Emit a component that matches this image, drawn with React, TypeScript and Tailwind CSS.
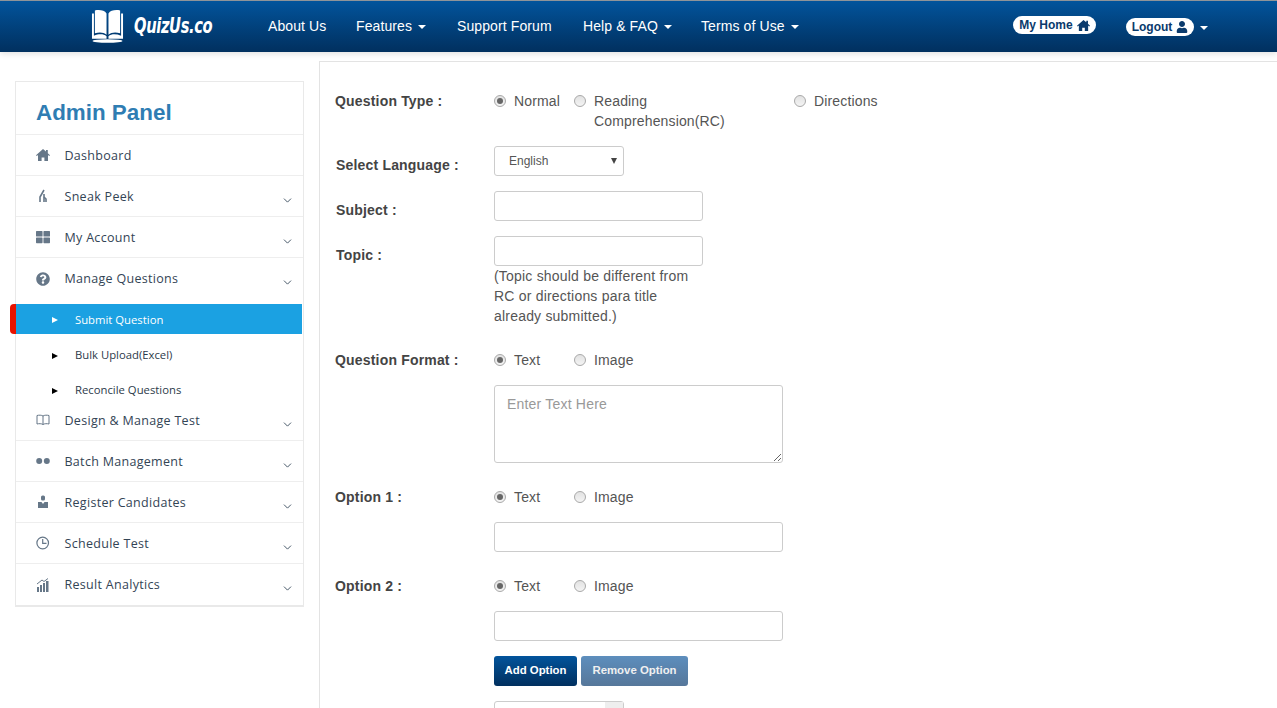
import { ChevronDown } from 'lucide-react';
import { FaUser, FaQuestionCircle, FaThLarge } from 'react-icons/fa';
import { ReactNode } from 'react';

function BookLogo() {
  return (
    <svg width="33" height="35" viewBox="0 0 34 35" className="shrink-0">
      <path d="M1 4 H3 V27 C8 25 13 25 16 27.5 V30 H1 Z" fill="#fff" />
      <path d="M33 4 H31 V27 C26 25 21 25 18 27.5 V30 H33 Z" fill="#fff" />
      <path d="M4 1 C9 0 14 1 16 4 V26 C13 23.5 9 23 4 24.5 Z" fill="#fff" />
      <path d="M30 1 C25 0 20 1 18 4 V26 C21 23.5 25 23 30 24.5 Z" fill="#fff" />
      <ellipse cx="17" cy="32.5" rx="15.5" ry="1.8" fill="#fff" />
    </svg>
  );
}

function HomeIcon({ size, color }: { size: number; color: string }) {
  return (
    <svg width={size} height={size} viewBox="0 0 14 14" fill={color} className="shrink-0">
      <path d="M7 1 L10 3.6 V2 H11.8 V5.2 L14 7.2 L13.2 8 L12 7 V13 H8.4 V9.4 H5.6 V13 H2 V7 L0.8 8 L0 7.2 Z" />
    </svg>
  );
}

function Caret() {
  return <span className="ml-[6px] inline-block border-x-4 border-t-4 border-x-transparent border-t-white align-middle" />;
}

function NavLink({ children, caret, className = '' }: { children: ReactNode; caret?: boolean; className?: string }) {
  return (
    <a className={`flex items-center text-[14px] tracking-[0.1px] whitespace-nowrap text-white ${className}`}>
      {children}
      {caret && <Caret />}
    </a>
  );
}

function Header() {
  return (
    <header className="flex h-[52px] items-center border-t border-[#8f9499] bg-gradient-to-b from-[#02549c] to-[#01305f] shadow-[0_2px_6px_rgba(0,0,0,0.12)]">
      <div className="ml-[91px] flex w-[177px] items-center gap-[10px]">
        <BookLogo />
        <span className="origin-left scale-x-[0.7] font-['DejaVu_Sans'] text-[21px] font-bold italic tracking-tight whitespace-nowrap text-white">
          QuizUs.co
        </span>
      </div>
      <nav className="flex items-center">
        <NavLink className="w-[88px]">About Us</NavLink>
        <NavLink caret className="w-[101px]">Features</NavLink>
        <NavLink className="w-[126px]">Support Forum</NavLink>
        <NavLink caret className="w-[118px]">Help &amp; FAQ</NavLink>
        <NavLink caret>Terms of Use</NavLink>
      </nav>
      <div className="ml-auto flex items-center">
        <span className="-mt-[3px] flex h-[18px] w-[83px] items-center justify-center gap-1 rounded-full bg-white text-[12px] font-bold text-[#0a3a6c]">
          My Home <HomeIcon size={13} color="#0a3a6c" />
        </span>
        <span className="mt-[1px] ml-[30px] flex h-[18px] w-[68px] items-center justify-center gap-1 rounded-full bg-white text-[12px] font-bold text-[#0a3a6c]">
          Logout <FaUser className="text-[12px]" />
        </span>
        <span className="mt-[1px] mr-[69px]">
          <Caret />
        </span>
      </div>
    </header>
  );
}

function PeekIcon() {
  return (
    <svg width="14" height="14" viewBox="0 0 14 14" fill="none" stroke="#667788" strokeWidth="1.6">
      <path d="M8 1 L4 8 V13 M8 5 V13" />
      <path d="M8 8 L10 10 V13" />
    </svg>
  );
}

function BookIcon() {
  return (
    <svg width="14" height="14" viewBox="0 0 14 14" fill="none" stroke="#667788" strokeWidth="1">
      <path d="M7 3 C5.5 2 3 2 1 2.5 V11 C3 10.5 5.5 10.5 7 11.5 C8.5 10.5 11 10.5 13 11 V2.5 C11 2 8.5 2 7 3 V11.5" />
    </svg>
  );
}

function DotsIcon() {
  return (
    <svg width="14" height="14" viewBox="0 0 14 14" fill="#667788">
      <circle cx="3.2" cy="7" r="3" />
      <circle cx="10.8" cy="7" r="3" />
    </svg>
  );
}

function PersonIcon() {
  return (
    <svg width="14" height="14" viewBox="0 0 14 14" fill="#667788">
      <rect x="5" y="0.5" width="4" height="5" rx="1.6" />
      <path d="M2 7 H5.5 L7 9 L8.5 7 H12 V13 H2 Z" />
    </svg>
  );
}

function ClockIcon() {
  return (
    <svg width="14" height="14" viewBox="0 0 14 14" fill="none" stroke="#667788" strokeWidth="1.2">
      <circle cx="6.7" cy="7" r="5.8" />
      <path d="M6.7 3 V7.4 H10.5" />
    </svg>
  );
}

function AnalyticsIcon() {
  return (
    <svg width="14" height="14" viewBox="0 0 14 14" fill="#667788">
      <rect x="1" y="9" width="2" height="5" />
      <rect x="4" y="7" width="2" height="7" />
      <rect x="7" y="5" width="2" height="9" />
      <rect x="10" y="3" width="2.5" height="11" />
      <path d="M1 6 L6 2 L8 3.5 L12 0.5" fill="none" stroke="#667788" strokeWidth="1" />
    </svg>
  );
}

const iconCls = 'text-[14px] text-[#667788]';

function MenuRow({ icon, label, chevron = true, border = true }: { icon: ReactNode; label: string; chevron?: boolean; border?: boolean }) {
  return (
    <div className={`flex h-[41px] items-center pl-[20px] ${border ? 'border-b border-[#eeeeee]' : ''}`}>
      <span className="flex w-[29px] shrink-0 items-center">{icon}</span>
      <span className="-ml-[0.5px] pt-[2px] text-[12.5px] tracking-[0.3px] text-[#334455]">{label}</span>
      {chevron && <ChevronDown size={13} strokeWidth={1.8} className="mt-[8px] mr-[9px] ml-auto text-[#445566]" />}
    </div>
  );
}

function SubRow({ label, active }: { label: string; active?: boolean }) {
  return (
    <div className={`relative flex items-center pt-[2px] pl-[36px] text-[11.3px] ${active ? 'h-[30px] bg-[#1ba1e2] text-white' : 'h-[35px] text-[#2c3a4a]'}`}>
      {active && <span className="absolute top-0 -left-[6px] h-[30px] w-[6px] rounded-l-[4px] bg-[#e81300]" />}
      <span className={`mr-[17px] h-0 w-0 border-y-[3.5px] border-l-[6px] border-y-transparent ${active ? 'border-l-white' : 'border-l-black'}`} />
      {label}
    </div>
  );
}

function Sidebar() {
  return (
    <aside className="mt-[29px] ml-[15px] w-[289px] shrink-0 self-start border border-b-2 border-[#e9e9e9] font-['Open_Sans']">
      <h2 className="flex h-[53px] items-center border-b border-[#eeeeee] pt-[10px] pl-[20px] font-['Liberation_Sans'] text-[22.4px] leading-none font-bold text-[#2f7db3]">
        Admin Panel
      </h2>
      <MenuRow icon={<HomeIcon size={14} color="#667788" />} label="Dashboard" chevron={false} />
      <MenuRow icon={<PeekIcon />} label="Sneak Peek" />
      <MenuRow icon={<FaThLarge className={iconCls} />} label="My Account" />
      <MenuRow icon={<FaQuestionCircle className={iconCls} />} label="Manage Questions" border={false} />
      <div className="mt-[5px] mr-[1px]">
        <SubRow label="Submit Question" active />
        <div className="mt-[3px]">
          <SubRow label="Bulk Upload(Excel)" />
          <SubRow label="Reconcile Questions" />
        </div>
      </div>
      <div className="-mt-[7px]">
        <MenuRow icon={<BookIcon />} label="Design & Manage Test" />
      </div>
      <MenuRow icon={<DotsIcon />} label="Batch Management" />
      <MenuRow icon={<PersonIcon />} label="Register Candidates" />
      <MenuRow icon={<ClockIcon />} label="Schedule Test" />
      <MenuRow icon={<AnalyticsIcon />} label="Result Analytics" border={false} />
    </aside>
  );
}

function Radio({ checked, label, className = '' }: { checked?: boolean; label: ReactNode; className?: string }) {
  return (
    <label className={`flex items-start text-[14px] leading-[20px] tracking-[0.15px] text-[#555555] ${className}`}>
      <span className="mt-[4px] mr-[8px] flex size-[12px] shrink-0 items-center justify-center rounded-full border border-[#a9a9a9] bg-gradient-to-b from-[#e2e2e2] to-[#f4f4f4]">
        {checked && <span className="size-[6px] rounded-full bg-[#666666]" />}
      </span>
      <span>{label}</span>
    </label>
  );
}

const labelCls = 'text-[14px] leading-[20px] font-bold tracking-[0.18px] text-[#444444]';

function Label({ children }: { children: ReactNode }) {
  return <span className={`w-[159px] shrink-0 ${labelCls}`}>{children}</span>;
}

function FieldLabel({ children }: { children: ReactNode }) {
  return <span className={`mt-[9px] ml-[1px] w-[158px] shrink-0 ${labelCls}`}>{children}</span>;
}

function TextInput({ wide }: { wide?: boolean }) {
  return <input className={`block h-[30px] rounded-[3px] border border-[#cccccc] bg-white ${wide ? 'w-[289px]' : 'w-[209px]'}`} />;
}

function FormatRow({ label }: { label: string }) {
  return (
    <div className="flex">
      <Label>{label}</Label>
      <Radio checked label="Text" className="w-[80px]" />
      <Radio label="Image" />
    </div>
  );
}

function Form() {
  return (
    <main className="mt-[9px] ml-[15px] min-w-0 flex-1 border-t border-l border-[#e3e3e3] pt-[29px] pl-[15px]">
      <div className="flex">
        <Label>Question Type :</Label>
        <Radio checked label="Normal" className="w-[80px]" />
        <Radio label={<>Reading<br />Comprehension(RC)</>} className="w-[220px]" />
        <Radio label="Directions" />
      </div>
      <div className="mt-[15px] flex">
        <FieldLabel>Select Language :</FieldLabel>
        <div className="flex h-[30px] w-[130px] items-center justify-between rounded-[3px] border border-[#cccccc] pr-[6px] pl-[14px] text-[12px] text-[#555555]">
          English
          <span className="border-x-[3.5px] border-t-[6px] border-x-transparent border-t-[#444444]" />
        </div>
      </div>
      <div className="mt-[15px] flex">
        <FieldLabel>Subject :</FieldLabel>
        <TextInput />
      </div>
      <div className="mt-[15px] flex">
        <FieldLabel>Topic :</FieldLabel>
        <div>
          <TextInput />
          <p className="w-[205px] text-[14px] leading-[20px] tracking-[0.2px] text-[#555555]">
            (Topic should be different from RC or directions para title already submitted.)
          </p>
        </div>
      </div>
      <div className="mt-[24px]">
        <FormatRow label="Question Format :" />
      </div>
      <div className="mt-[15px] ml-[159px]">
        <textarea
          placeholder="Enter Text Here"
          className="block h-[78px] w-[289px] rounded-[3px] border border-[#cccccc] px-[12px] py-[8px] text-[14px] leading-[20px] tracking-[0.2px] placeholder:text-[#999999]"
        />
      </div>
      <div className="mt-[24px]">
        <FormatRow label="Option 1 :" />
      </div>
      <div className="mt-[15px] ml-[159px]">
        <TextInput wide />
      </div>
      <div className="mt-[24px]">
        <FormatRow label="Option 2 :" />
      </div>
      <div className="mt-[15px] ml-[159px]">
        <TextInput wide />
        <div className="mt-[15px] flex gap-[4px]">
          <button className="h-[30px] w-[83px] rounded-[3px] bg-gradient-to-b from-[#02549c] to-[#01305f] text-[11.4px] font-bold text-white">Add Option</button>
          <button className="h-[30px] w-[107px] rounded-[3px] bg-gradient-to-b from-[#5d8ebd] to-[#56779a] text-[11.4px] font-bold text-[#f0f0f0]">Remove Option</button>
        </div>
        <div className="mt-[15px] flex h-[30px] w-[130px] justify-end rounded-[3px] border border-[#cccccc]">
          <span className="w-[18px] bg-[#eeeeee]" />
        </div>
      </div>
    </main>
  );
}

export default function App() {
  return (
    <div className="h-[708px] overflow-hidden bg-white font-['Liberation_Sans',sans-serif]">
      <Header />
      <div className="flex">
        <Sidebar />
        <Form />
      </div>
    </div>
  );
}
